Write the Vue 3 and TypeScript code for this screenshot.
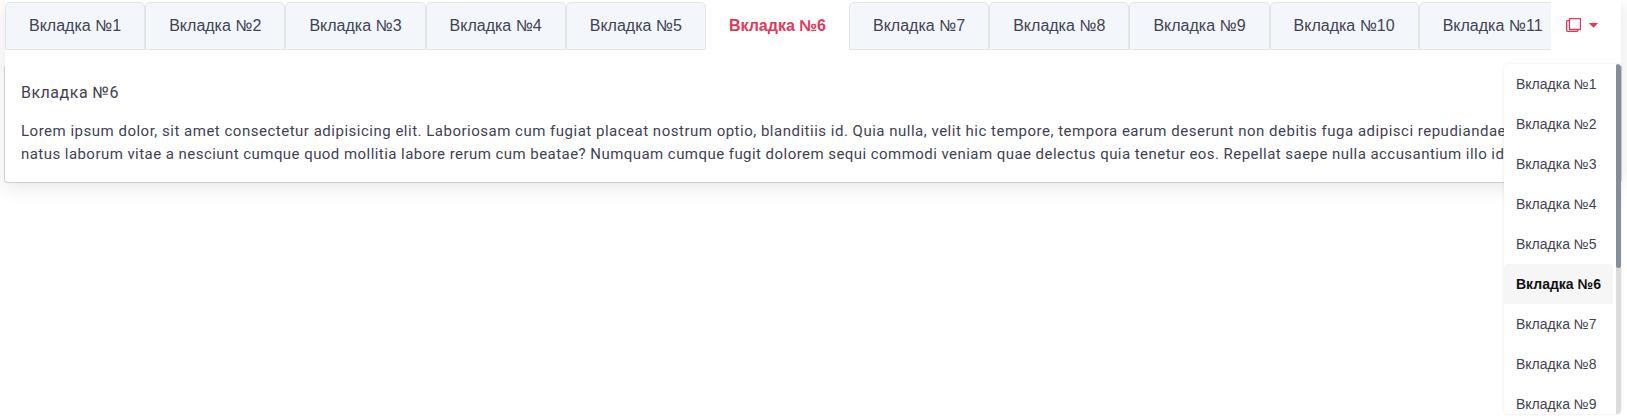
<script setup lang="ts">
import { ref } from 'vue'

const tabs: string[] = Array.from({ length: 11 }, (_, i) => `Вкладка №${i + 1}`)
const menuItems = tabs.slice(0, 9)
const active = ref(5)
</script>

<template>
  <main class="page">
    <div class="widget">
      <header class="head">
        <nav class="tabs">
          <button
            v-for="(tab, i) in tabs"
            :key="tab"
            class="tab"
            :class="{ active: i === active }"
            @click="active = i"
          >{{ tab }}</button>
        </nav>
        <button class="toggle" aria-label="Все вкладки">
          <svg class="copy" width="15" height="15" viewBox="0 0 15 15" fill="none" stroke="currentColor">
            <path d="M3.5 .5h11v11h-11z" stroke-width="1.3" stroke-linejoin="round" />
            <path d="M3 2.6H1.6a1 1 0 0 0-1 1v8.8a1 1 0 0 0 1 1h9.2a1 1 0 0 0 1-1v-.9" stroke-width="1.3" />
          </svg>
          <svg class="caret" width="9" height="5" viewBox="0 0 9 5" fill="currentColor">
            <path d="M.3 0h8.4v.6L4.5 4.8.3.6z" />
          </svg>
        </button>
      </header>
      <section class="panel">
        <h2 class="title">{{ tabs[active] }}</h2>
        <p class="text">
          <span class="line first">Lorem ipsum dolor, sit amet consectetur adipisicing elit. Laboriosam cum fugiat placeat nostrum optio, blanditiis id. Quia nulla, velit hic tempore, tempora earum deserunt non debitis fuga adipisci repudiandae</span>
          <span class="line second">natus laborum vitae a nesciunt cumque quod mollitia labore rerum cum beatae? Numquam cumque fugit dolorem sequi commodi veniam quae delectus quia tenetur eos. Repellat saepe nulla accusantium illo id</span>
        </p>
      </section>
      <div class="menu">
        <ul class="list">
          <li
            v-for="(item, i) in menuItems"
            :key="item"
            class="item"
            :class="{ current: i === active }"
          >{{ item }}</li>
        </ul>
        <div class="track"><div class="thumb"></div></div>
      </div>
    </div>
  </main>
</template>

<style>
body {
  background: #fff;
}
</style>

<style scoped>
.page {
  box-sizing: border-box;
  height: 419px;
  padding: 0 6px 0 5px;
  overflow: hidden;
}
.widget {
  position: relative;
  height: 183px;
  background: #fff;
  border-radius: 0 0 4px 4px;
  box-shadow: 0 4px 20px rgba(0, 0, 0, 0.1);
  color: #3f4254;
  font-family: "Liberation Sans", Arial, sans-serif;
}
.head {
  display: flex;
  height: 66px;
  align-items: flex-start;
}
.tabs {
  display: flex;
  width: 1546px;
  padding-top: 2px;
  overflow: hidden;
}
.tab {
  flex: none;
  box-sizing: border-box;
  height: 48px;
  padding: 0 23px;
  border: 1px solid #e4e4e7;
  border-radius: 5px 5px 0 0;
  background: #f3f7fc;
  color: #3f4254;
  font: 16px "Liberation Sans", Arial, sans-serif;
  white-space: nowrap;
}
.tab.active {
  padding: 0 22px;
  border-color: transparent;
  background: #fff;
  color: #e4375a;
  font-weight: 700;
}
.toggle {
  display: flex;
  align-items: center;
  gap: 8px;
  padding: 0;
  margin: 18px 0 0 15px;
  border: 0;
  background: none;
  color: #e4375a;
}
.copy,
.caret {
  display: block;
}
.panel {
  box-sizing: border-box;
  height: 117px;
  margin: 0 -1px;
  padding: 15px 0 0 16px;
  border: 1px solid #cfcfd2;
  border-top: 0;
  border-radius: 0 0 4px 4px;
  background: #fff;
  font-family: Roboto, "Noto Sans", sans-serif;
  overflow: hidden;
}
.title {
  margin: 0;
  font-size: 16px;
  line-height: 24px;
  font-weight: 400;
  letter-spacing: 0.5px;
}
.text {
  margin: 15px 0 0;
  font-size: 15px;
  line-height: 23px;
}
.line {
  display: block;
  white-space: nowrap;
}
.first {
  letter-spacing: 0.506px;
}
.second {
  letter-spacing: 0.451px;
}
.menu {
  position: absolute;
  top: 64px;
  right: 0;
  display: flex;
  justify-content: space-between;
  width: 117px;
  height: 350px;
  overflow: hidden;
  border-radius: 4px;
  background: #fff;
  box-shadow: 0 0 3px rgba(0, 0, 0, 0.1);
}
.list {
  width: 109px;
  margin: 0;
  padding: 0;
  list-style: none;
}
.item {
  box-sizing: border-box;
  height: 40px;
  padding-left: 12px;
  border-radius: 4px 4px 0 0;
  font-size: 14px;
  line-height: 40px;
  white-space: nowrap;
}
.item.current {
  background: #f6f6f6;
  color: #111;
  font-weight: 700;
}
.track {
  width: 5px;
  background: #dcdcdc;
}
.thumb {
  height: 204px;
  border-radius: 3px;
  background: #848e99;
}
</style>
